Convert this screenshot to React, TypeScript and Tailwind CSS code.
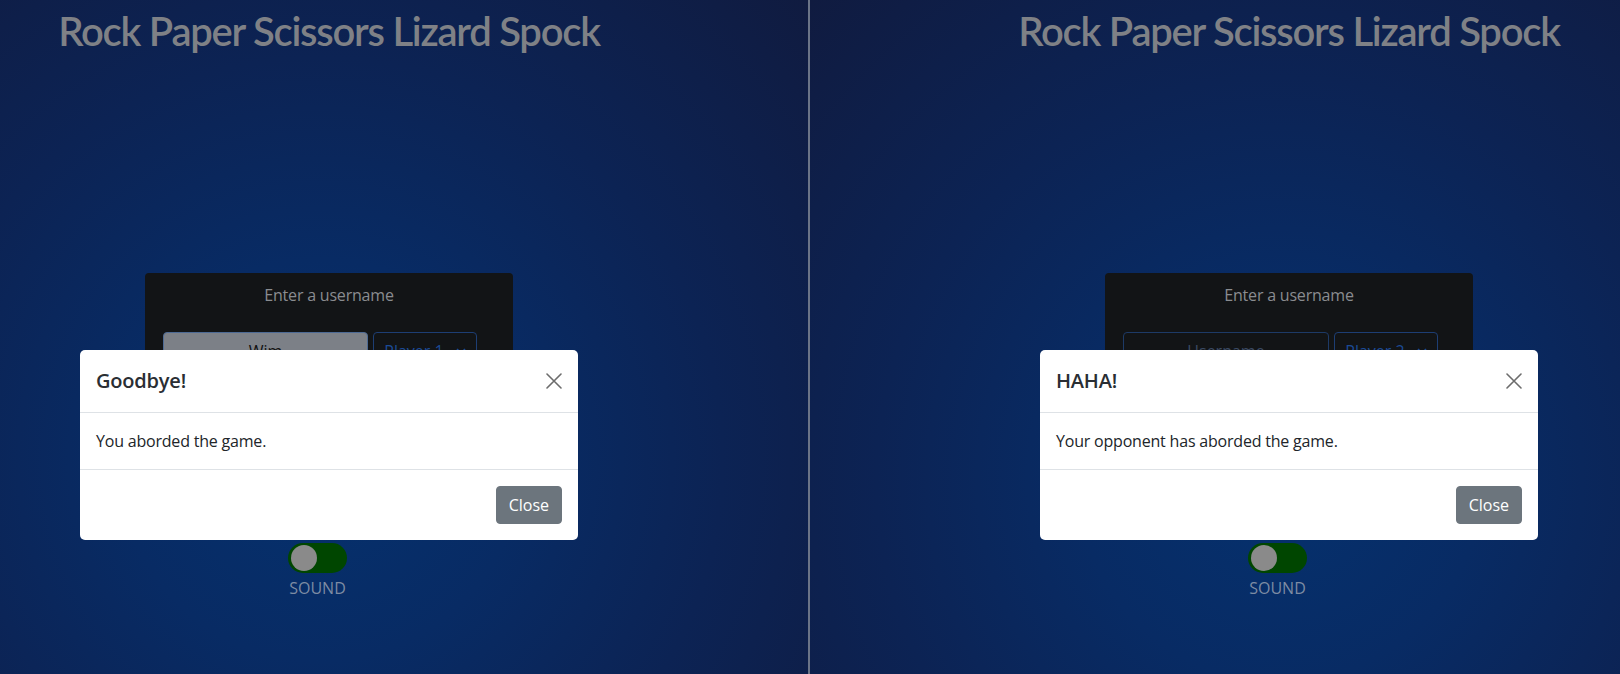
import React from "react";

const font = { fontFamily: '"Segoe UI", "Open Sans", "Noto Sans", sans-serif' };
const titleFont = { fontFamily: 'Lato, "Open Sans", sans-serif' };

function CloseX() {
  return (
    <svg width="16" height="16" viewBox="0 0 16 16" className="block">
      <path
        d="M1 1 L15 15 M15 1 L1 15"
        stroke="#6c6c6c"
        strokeWidth="1.6"
        strokeLinecap="round"
        fill="none"
      />
    </svg>
  );
}

function Chevron() {
  return (
    <svg width="10" height="10" viewBox="0 0 10 10" className="block">
      <path d="M1 3 L5 7 L9 3" stroke="#1b4a95" strokeWidth="1.6" fill="none" />
    </svg>
  );
}

function Modal({ title, body }: { title: string; body: string }) {
  return (
    <div className="w-[498px] bg-white rounded-[5px] flex flex-col text-[#212529]">
      <div className="flex items-start justify-between p-4 border-b border-[#dee2e6]">
        <div className="text-[20px] leading-[30px] font-semibold tracking-[-0.2px] text-[#2a2e33]">{title}</div>
        <div className="h-[30px] flex items-center">
          <CloseX />
        </div>
      </div>
      <div className="p-4 text-[16px] leading-6 tracking-[-0.2px] border-b border-[#dee2e6]">{body}</div>
      <div className="flex justify-end p-3">
        <button className="m-1 h-[38px] px-3 rounded-[4px] bg-[#6c757d] border border-[#6c757d] text-white text-[16px] leading-6">
          Close
        </button>
      </div>
    </div>
  );
}

function Pane({
  filled,
  player,
  title,
  body,
}: {
  filled: boolean;
  player: string;
  title: string;
  body: string;
}) {
  return (
    <div className="w-[658px] shrink-0 flex flex-col items-center relative h-full">
      <h1
        className="mt-[7px] text-[40px] leading-[48px] font-semibold tracking-[-1.25px] text-[#7f8186] whitespace-nowrap"
        style={titleFont}
      >
        Rock Paper Scissors Lizard Spock
      </h1>
      <div className="mt-[218px] w-[368px] h-[262px] bg-[#121416] rounded-[4px] flex flex-col">
        <div className="pt-[10px] pb-[14px] text-center text-[16px] leading-6 tracking-[-0.2px] text-[#8a8c90]">
          Enter a username
        </div>
        <div className="mt-[11px] pl-[18px] flex gap-[5px]">
          {filled ? (
            <div className="w-[205px] h-[38px] rounded-[4px] bg-[#7c8087] border border-[#4d6a94] flex items-center justify-center text-[16px] text-[#111]">
              Wim
            </div>
          ) : (
            <div className="w-[206px] h-[38px] rounded-[4px] border border-[#1d3a66] flex items-center justify-center text-[16px] text-[#3b4a63]">
              Username
            </div>
          )}
          <div className="w-[104px] h-[38px] rounded-[4px] border border-[#1d3e74] flex items-center justify-center gap-3 text-[16px] text-[#1b4a95]">
            <span>{player}</span>
            <Chevron />
          </div>
        </div>
      </div>
      <div className="mt-[8px] mr-[23px] flex flex-col items-center">
        <div className="w-[59px] h-[30px] rounded-full bg-[#004600] flex items-center pl-[3px]">
          <div className="w-[26px] h-[26px] rounded-full bg-[#8a8a8a]" />
        </div>
        <div className="mt-[5px] text-[16px] leading-5 text-[#7d8ba3]">SOUND</div>
      </div>
      <div className="absolute left-0 right-0 top-[350px] flex justify-center">
        <Modal title={title} body={body} />
      </div>
    </div>
  );
}

export default function App() {
  return (
    <div className="w-[1620px] h-[674px] flex overflow-hidden" style={font}>
      <div className="w-[808px] h-full shrink-0 bg-[radial-gradient(circle_at_320px_460px,#05316e_0%,#082b64_30%,#0c2354_60%,#101b40_100%)] flex">
        <Pane
          filled={true}
          player="Player 1"
          title="Goodbye!"
          body="You aborded the game."
        />
      </div>
      <div className="w-[2px] h-full shrink-0 bg-[#6b7487]" />
      <div className="flex-1 h-full overflow-hidden bg-[radial-gradient(circle_at_470px_480px,#05316e_0%,#082b64_30%,#0c2354_60%,#101b40_100%)] flex pl-[150px]">
        <Pane
          filled={false}
          player="Player 2"
          title="HAHA!"
          body="Your opponent has aborded the game."
        />
      </div>
    </div>
  );
}
